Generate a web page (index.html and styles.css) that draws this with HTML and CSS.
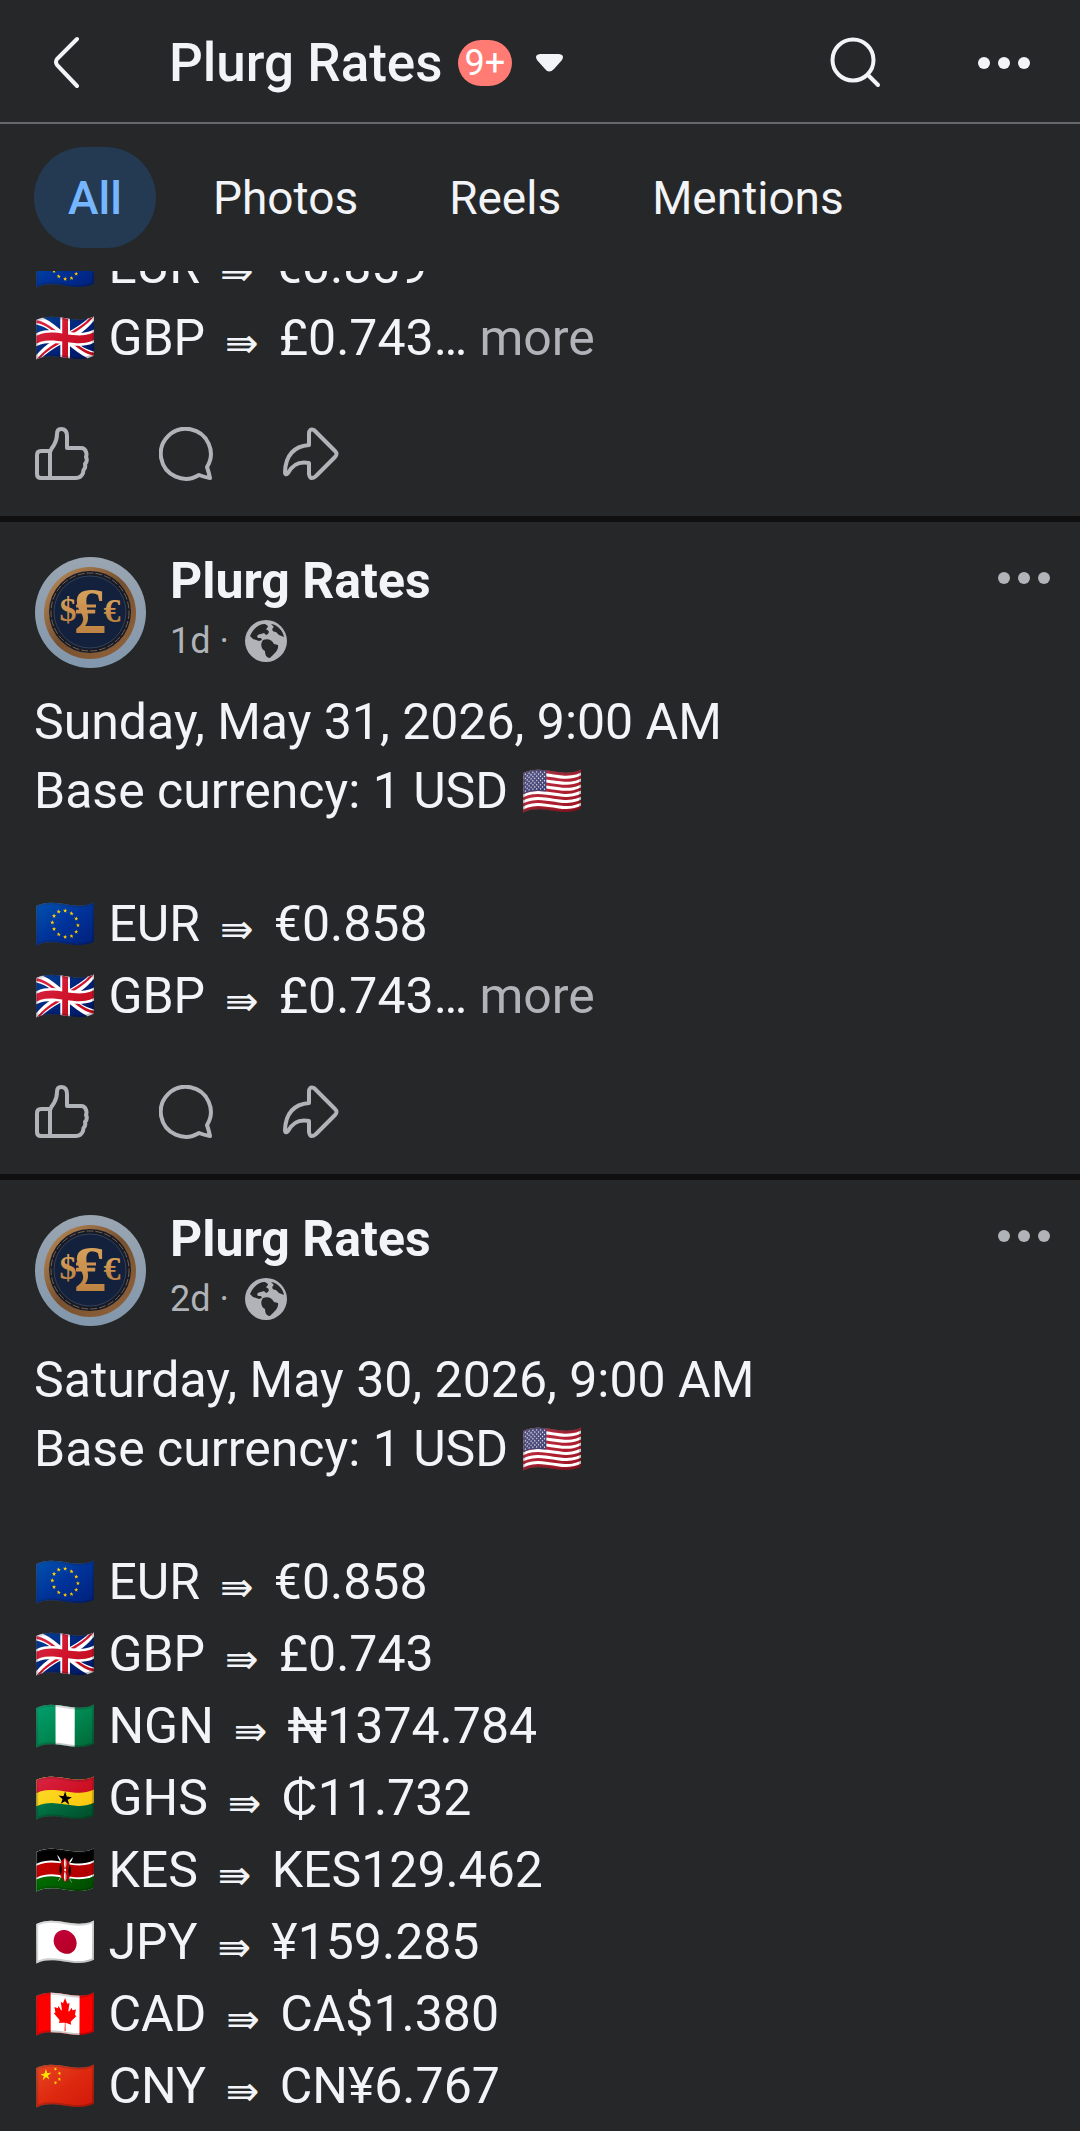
FILE: index.html
```html
<!DOCTYPE html>
<html lang="en">
    <head>
        <meta charset="utf-8">
        <title>Plurg Rates</title>
        <meta name="viewport" content="width=device-width, initial-scale=1">

        <link rel="stylesheet" href="styles.css">
    </head>
    <body>

        <!-- Shared icons -->
        <svg class="sprite" aria-hidden="true">
            <defs>
                <linearGradient id="avatar-bg" x1="0" y1="0" x2="0" y2="1">
                    <stop offset="0" stop-color="#9aa5b1"/>
                    <stop offset="1" stop-color="#8297ac"/>
                </linearGradient>
                <linearGradient id="avatar-rim" x1="0" y1="0" x2="1" y2="1">
                    <stop offset="0" stop-color="#c0905c"/>
                    <stop offset=".5" stop-color="#76502f"/>
                    <stop offset="1" stop-color="#94653c"/>
                </linearGradient>
                <linearGradient id="avatar-gold" x1="0" y1="0" x2="0" y2="1">
                    <stop offset="0" stop-color="#e0ac63"/>
                    <stop offset="1" stop-color="#b5793a"/>
                </linearGradient>
            </defs>
            <symbol id="icon-dots" viewBox="0 0 52 12">
                <circle cx="6" cy="6" r="6"/>
                <circle cx="26" cy="6" r="6"/>
                <circle cx="46" cy="6" r="6"/>
            </symbol>
            <symbol id="icon-like" viewBox="0 0 54 54">
                <path d="M15 24H6Q2 24 2 28V47Q2 51 6 51H41Q46 51 48 46L48.500 43Q51 41 50 37Q53 34 51 30Q52 27 51 25Q50 21 46 21H32V9Q32 2 26 2Q22 2 22 7Q22 13 19 18Q16 22 15 25V51"/>
            </symbol>
            <symbol id="icon-comment" viewBox="0 0 54 54">
                <path d="M40 48A25 25 0 1 1 48 40Q50 46 51 51Q45 50 40 48Z"/>
            </symbol>
            <symbol id="icon-share" viewBox="0 0 56 54">
                <path d="M26 18V7Q26 1 31 3L52 24Q55 27 52 30L33 49Q27 54 26 47V36Q12 33 5 46Q2 49 2 45Q3 20 26 18Z"/>
            </symbol>
            <symbol id="icon-globe" viewBox="0 0 42 42">
                <circle class="globe__sea" cx="21" cy="21" r="21"/>
                <path class="globe__land" d="M5 16C8 9 13 4 20 4L23 6C23 8 20 9 22 10C25 11 24 14 21 15L19 13L16 14C13 14 11 16 13 18L16 18L17 20L14 21L8 19ZM18 20C23 18 27 20 29 24L33 25C34 30 29 34 25 38C21 38 20 34 20 31C16 29 15 24 18 20ZM26 4C33 5 38 11 39 17L34 15L31 12C27 12 26 9 29 7Z"/>
            </symbol>
            <symbol id="icon-avatar" viewBox="0 0 111 111">
                <circle cx="55.500" cy="55.500" r="55.500" fill="url(#avatar-bg)"/>
                <circle cx="55" cy="56" r="46" fill="url(#avatar-rim)"/>
                <circle cx="55" cy="55" r="41" fill="#171a27"/>
                <circle cx="55" cy="55" r="39" fill="none" stroke="#75614c" stroke-dasharray="7 2"/>
                <circle cx="55" cy="55" r="36" fill="#14213d" stroke="#34425a"/>
                <g class="coin__sign" fill="url(#avatar-gold)" text-anchor="middle">
                    <text x="33" y="64" font-size="34">$</text>
                    <text x="55" y="76" font-size="66">£</text>
                    <text x="77" y="65" font-size="34">€</text>
                </g>
                <path d="M41 49H61M41 55H60" stroke="#cb9250" stroke-width="3"/>
            </symbol>
        </svg>

        <header class="topbar">
            <button class="topbar__back" aria-label="Back">
                <svg width="27" height="53" viewBox="0 0 27 53"><path d="M24 3L4 23Q2 26 4 29L24 50"/></svg>
            </button>
            <button class="topbar__page">
                <span class="topbar__title">Plurg Rates</span>
                <span class="topbar__badge">9+</span>
                <svg class="topbar__caret" width="27" height="18" viewBox="0 0 27 18"><path d="M4 0H23Q29 1 26 6L18 15Q13 20 9 15L1 6Q-2 1 4 0Z"/></svg>
            </button>
            <button class="topbar__search" aria-label="Search">
                <svg width="52" height="52" viewBox="0 0 52 52"><circle cx="23" cy="23" r="20.500"/><path d="M38 38L48 48"/></svg>
            </button>
            <button class="topbar__more" aria-label="More options">
                <svg width="52" height="12"><use href="#icon-dots"/></svg>
            </button>
        </header>

        <nav class="tabs">
            <a class="tabs__item tabs__item--active" href="#all" aria-current="page">All</a>
            <a class="tabs__item" href="#photos">Photos</a>
            <a class="tabs__item" href="#reels">Reels</a>
            <a class="tabs__item" href="#mentions">Mentions</a>
        </nav>

        <main class="feed">

            <article class="post post--scrolled">
                <div class="post__rates">
                    <p>🇪🇺 EUR <span class="arrow">⇛</span> €0.859</p>
                    <p>🇬🇧 GBP <span class="arrow">⇛</span> £0.743… <button class="post__expand">more</button></p>
                </div>
                <div class="post__actions">
                    <button aria-label="Like"><svg width="54" height="54"><use href="#icon-like"/></svg></button>
                    <button aria-label="Comment"><svg width="54" height="54"><use href="#icon-comment"/></svg></button>
                    <button aria-label="Share"><svg width="56" height="54"><use href="#icon-share"/></svg></button>
                </div>
            </article>

            <article class="post">
                <div class="post__header">
                    <svg class="post__avatar" width="111" height="111" role="img" aria-label="Plurg Rates"><use href="#icon-avatar"/></svg>
                    <div class="post__author">
                        <h2><a href="#page">Plurg Rates</a></h2>
                        <p class="post__meta">1d · <svg width="42" height="42" role="img" aria-label="Public"><use href="#icon-globe"/></svg></p>
                    </div>
                    <button class="post__menu" aria-label="Post options"><svg width="52" height="12"><use href="#icon-dots"/></svg></button>
                </div>
                <p class="post__date">Sunday, May 31, 2026, 9:00 AM</p>
                <p class="post__base">Base currency: 1 USD 🇺🇸</p>
                <div class="post__rates">
                    <p>🇪🇺 EUR <span class="arrow">⇛</span> €0.858</p>
                    <p>🇬🇧 GBP <span class="arrow">⇛</span> £0.743… <button class="post__expand">more</button></p>
                </div>
                <div class="post__actions">
                    <button aria-label="Like"><svg width="54" height="54"><use href="#icon-like"/></svg></button>
                    <button aria-label="Comment"><svg width="54" height="54"><use href="#icon-comment"/></svg></button>
                    <button aria-label="Share"><svg width="56" height="54"><use href="#icon-share"/></svg></button>
                </div>
            </article>

            <article class="post">
                <div class="post__header">
                    <svg class="post__avatar" width="111" height="111" role="img" aria-label="Plurg Rates"><use href="#icon-avatar"/></svg>
                    <div class="post__author">
                        <h2><a href="#page">Plurg Rates</a></h2>
                        <p class="post__meta">2d · <svg width="42" height="42" role="img" aria-label="Public"><use href="#icon-globe"/></svg></p>
                    </div>
                    <button class="post__menu" aria-label="Post options"><svg width="52" height="12"><use href="#icon-dots"/></svg></button>
                </div>
                <p class="post__date">Saturday, May 30, 2026, 9:00 AM</p>
                <p class="post__base">Base currency: 1 USD 🇺🇸</p>
                <div class="post__rates">
                    <p>🇪🇺 EUR <span class="arrow">⇛</span> €0.858</p>
                    <p>🇬🇧 GBP <span class="arrow">⇛</span> £0.743</p>
                    <p>🇳🇬 NGN <span class="arrow">⇛</span> ₦1374.784</p>
                    <p>🇬🇭 GHS <span class="arrow">⇛</span> ₵11.732</p>
                    <p>🇰🇪 KES <span class="arrow">⇛</span> KES129.462</p>
                    <p>🇯🇵 JPY <span class="arrow">⇛</span> ¥159.285</p>
                    <p>🇨🇦 CAD <span class="arrow">⇛</span> CA$1.380</p>
                    <p>🇨🇳 CNY <span class="arrow">⇛</span> CN¥6.767</p>
                </div>
            </article>

        </main>

    </body>
</html>
```
FILE: styles.css
```css
* {
    box-sizing: border-box;
}

body {
    margin: 0;
    background-color: #252728;
    color: #f2f4f7;
    font-family: Roboto, sans-serif;
    font-size: 50px;
    line-height: 72px;
}

h2,
p {
    margin: 0;
}

a {
    color: inherit;
    text-decoration: none;
}

button {
    margin: 0;
    padding: 0;
    border: 0;
    background: none;
    color: inherit;
    font: inherit;
    cursor: pointer;
}

svg {
    display: block;
    fill: currentColor;
}

.sprite {
    position: absolute;
    width: 0;
    height: 0;
}

/* Top bar */

.topbar {
    display: flex;
    align-items: center;
    height: 124px;
    padding: 3px 50px 0 53px;
    border-bottom: 2px solid #65676b;
}

.topbar__back svg,
.topbar__search svg {
    fill: none;
    stroke: currentColor;
    stroke-width: 4px;
    stroke-linecap: round;
}

.topbar__page {
    display: flex;
    align-items: center;
    margin: 0 auto 0 89px;
}

.topbar__title {
    font-size: 53px;
    font-weight: 500;
}

.topbar__badge {
    margin: 0 24px 0 15px;
    padding: 0 7px;
    border-radius: 23px;
    background-color: #ff7b74;
    color: #fff;
    font-size: 36px;
    line-height: 46px;
}

.topbar__search {
    margin-right: 96px;
}

/* Tabs */

.tabs {
    display: flex;
    gap: 23px;
    padding: 23px 34px;
}

.tabs__item {
    padding: 1px 34px 0;
    border-radius: 51px;
    font-size: 46px;
    line-height: 100px;
}

.tabs__item--active {
    background-color: #243a52;
    color: #75b6ff;
    font-weight: 500;
}

/* Feed */

.feed {
    overflow: hidden;
}

.post {
    padding: 35px 30px 35px 34px;
    border-bottom: 6px solid #101011;
}

.post:last-child {
    padding-bottom: 0;
    border-bottom: 0;
}

/* The first post is partly scrolled under the tabs */
.post--scrolled {
    margin-top: -41px;
    padding-top: 0;
}

.post__header {
    display: flex;
    align-items: flex-start;
    margin-bottom: 21px;
    padding-left: 1px;
}

.post__author {
    flex: 1;
    margin-left: 24px;
}

.post__author h2 {
    font-size: 50px;
    font-weight: 700;
    line-height: 48px;
}

.post__meta {
    display: flex;
    align-items: center;
    gap: 16px;
    margin-top: 14px;
    color: #b0b3b8;
    font-size: 36px;
    line-height: 44px;
}

.globe__sea {
    fill: #b0b3b8;
}

.globe__land {
    fill: #252728;
}

.coin__sign {
    font-family: "Liberation Serif", serif;
    font-weight: 700;
}

.post__menu {
    margin-top: 15px;
    color: #b0b3b8;
}

.post__date {
    line-height: 66px;
}

.post__rates {
    white-space: nowrap;
}

.post__base + .post__rates {
    margin-top: 61px;
}

.arrow {
    display: inline-block;
    width: 49px;
    font-family: "DejaVu Sans", sans-serif;
    font-size: 40px;
    line-height: 40px;
    text-align: center;
    vertical-align: -2px;
}

.post__expand {
    color: #b0b3b8;
}

.post__actions {
    display: flex;
    gap: 70px;
    margin-top: 53px;
    padding-left: 1px;
    color: #b0b3b8;
}

.post__actions svg {
    fill: none;
    stroke: currentColor;
    stroke-width: 4px;
    stroke-linejoin: round;
}
```
